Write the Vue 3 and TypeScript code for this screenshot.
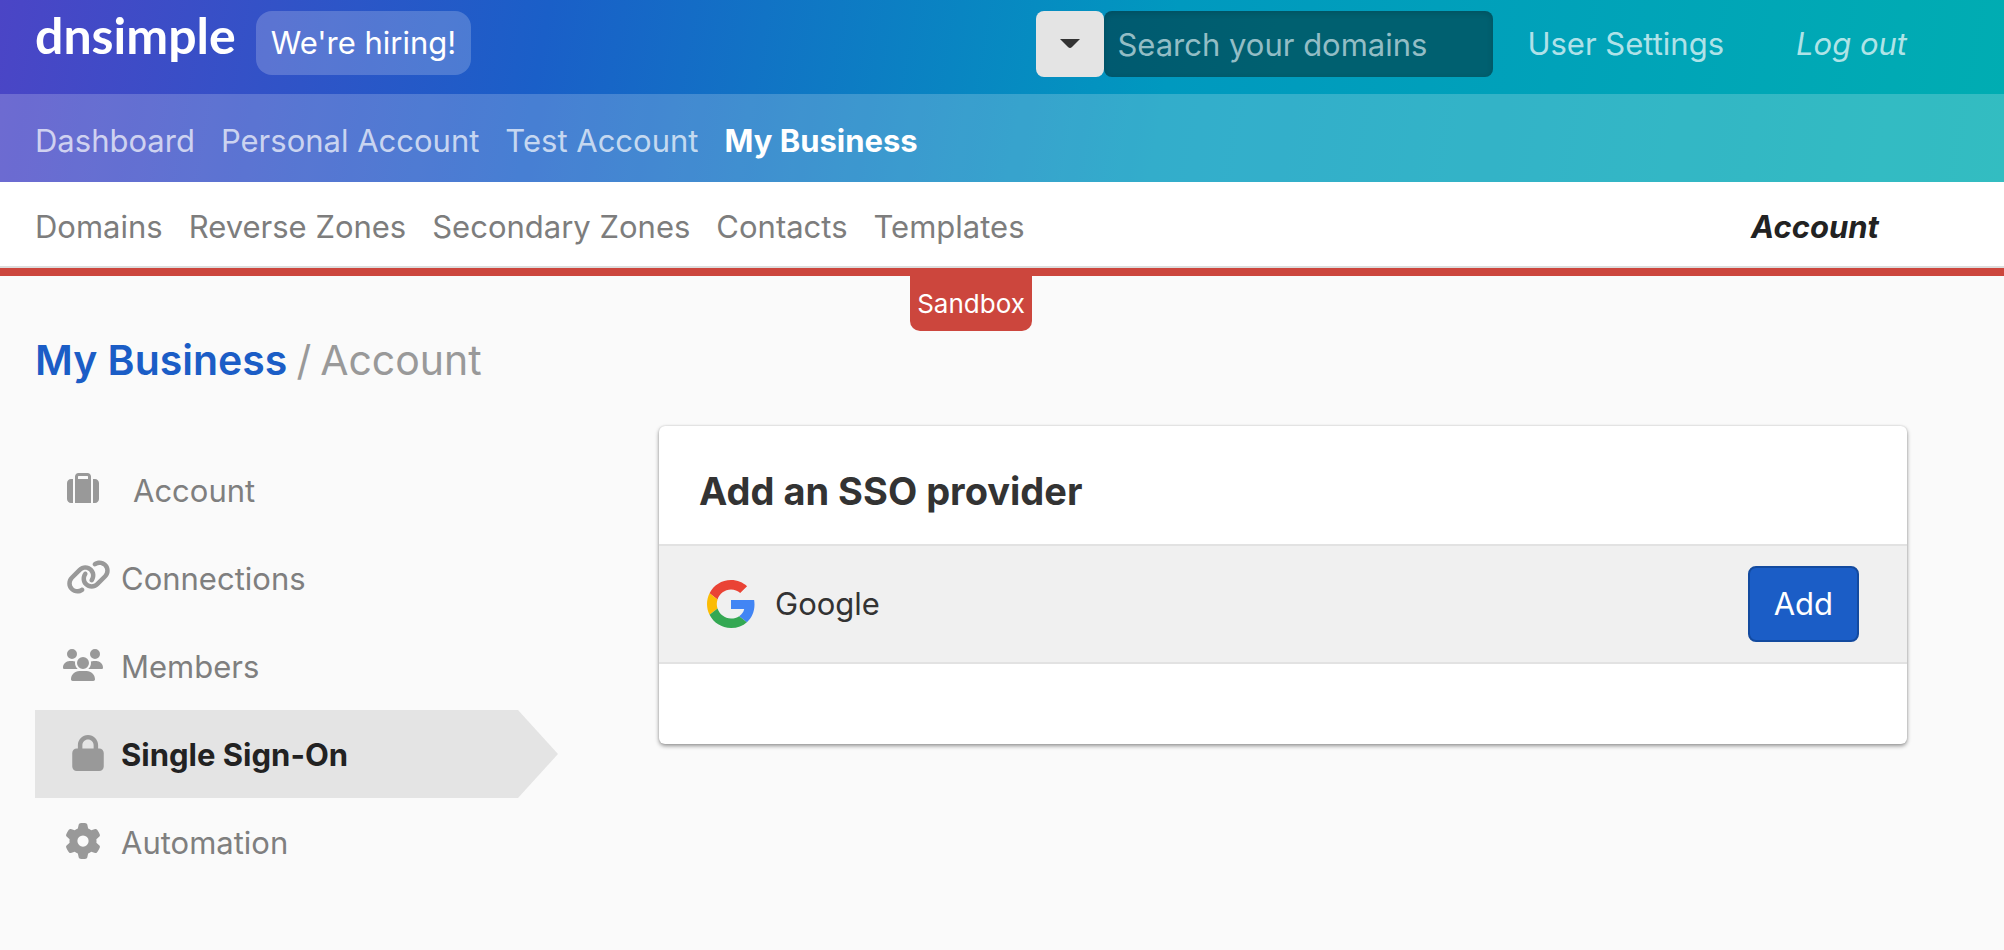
<script setup lang="ts">
import { ref } from 'vue'

interface Icon {
  width: number
  height: number
  viewBox: string
  path: string
}

interface SideItem {
  label: string
  icon: Icon
  active?: boolean
  inset?: boolean
  spaced?: boolean
}

const query = ref('')

const accounts = ['Dashboard', 'Personal Account', 'Test Account', 'My Business']
const sections = ['Domains', 'Reverse Zones', 'Secondary Zones', 'Contacts', 'Templates']

const suitcase: Icon = {
  width: 32,
  height: 32,
  viewBox: '0 0 512 512',
  path: 'M176 56V96H336V56c0-4.400-3.600-8-8-8H184c-4.400 0-8 3.600-8 8zM128 96V56c0-30.900 25.100-56 56-56H328c30.900 0 56 25.100 56 56V96v32V480H128V128 96zM64 96H96V480H64c-35.300 0-64-28.700-64-64V160c0-35.300 28.700-64 64-64zM448 480H416V96h32c35.300 0 64 28.700 64 64V416c0 35.300-28.700 64-64 64z',
}

const link: Icon = {
  width: 45,
  height: 36,
  viewBox: '0 0 640 512',
  path: 'M579.8 267.7c56.5-56.5 56.5-148 0-204.5c-50-50-128.8-56.5-186.3-15.4l-1.6 1.1c-14.4 10.3-17.7 30.3-7.4 44.6s30.3 17.7 44.6 7.4l1.6-1.1c32.1-22.9 76-19.3 103.8 8.6c31.5 31.5 31.5 82.500 0 114L422.3 334.8c-31.5 31.5-82.5 31.5-114 0c-27.9-27.9-31.5-71.8-8.6-103.8l1.1-1.6c10.3-14.4 6.9-34.4-7.4-44.6s-34.4-6.9-44.6 7.4l-1.1 1.6C206.5 251.2 213 330 263 380c56.5 56.5 148 56.5 204.5 0L579.8 267.7zM60.2 244.3c-56.5 56.5-56.5 148 0 204.5c50 50 128.8 56.5 186.3 15.4l1.6-1.1c14.4-10.3 17.7-30.3 7.4-44.6s-30.3-17.7-44.6-7.4l-1.6 1.1c-32.1 22.9-76 19.3-103.8-8.6C74 372 74 321 105.5 289.5L217.7 177.2c31.5-31.5 82.5-31.5 114 0c27.9 27.9 31.5 71.8 8.6 103.9l-1.1 1.6c-10.3 14.4-6.9 34.4 7.4 44.6s34.4 6.9 44.6-7.4l1.1-1.6C433.5 260.8 427 182 377 132c-56.5-56.5-148-56.5-204.5 0L60.2 244.3z',
}

const users: Icon = {
  width: 40,
  height: 32,
  viewBox: '0 0 640 512',
  path: 'M144 0a80 80 0 1 1 0 160A80 80 0 1 1 144 0zM512 0a80 80 0 1 1 0 160A80 80 0 1 1 512 0zM0 298.7C0 239.8 47.8 192 106.700 192h42.7c15.9 0 31 3.500 44.600 9.700c-1.300 7.200-1.900 14.700-1.900 22.300c0 38.200 16.800 72.500 43.300 96c-.2 0-.4 0-.7 0H21.300C9.600 320 0 310.400 0 298.700zM405.300 320c-.2 0-.4 0-.7 0c26.600-23.500 43.300-57.800 43.300-96c0-7.600-.7-15-1.900-22.300c13.600-6.300 28.700-9.700 44.600-9.700h42.700C592.200 192 640 239.800 640 298.700c0 11.800-9.600 21.300-21.300 21.300H405.300zM224 224a96 96 0 1 1 192 0 96 96 0 1 1 -192 0zM128 485.300C128 411.700 187.700 352 261.300 352H378.700C452.300 352 512 411.700 512 485.300c0 14.700-11.900 26.700-26.700 26.700H154.700c-14.700 0-26.700-11.900-26.700-26.700z',
}

const lock: Icon = {
  width: 32,
  height: 36,
  viewBox: '0 0 448 512',
  path: 'M144 144v48H304V144c0-44.200-35.800-80-80-80s-80 35.800-80 80zM80 192V144C80 64.500 144.500 0 224 0s144 64.500 144 144v48h16c35.300 0 64 28.700 64 64V448c0 35.300-28.700 64-64 64H64c-35.300 0-64-28.700-64-64V256c0-35.300 28.700-64 64-64H80z',
}

const gear: Icon = {
  width: 36,
  height: 36,
  viewBox: '0 0 512 512',
  path: 'M495.9 166.6c3.2 8.7 .5 18.4-6.4 24.6l-43.3 39.4c1.1 8.3 1.7 16.8 1.7 25.4s-.6 17.1-1.7 25.4l43.3 39.4c6.9 6.2 9.6 15.9 6.4 24.6c-4.4 11.9-9.7 23.300-15.800 34.300l-4.700 8.100c-6.600 11-14 21.400-22.100 31.200c-5.900 7.200-15.700 9.600-24.500 6.800l-55.700-17.700c-13.400 10.300-28.200 18.900-44 25.400l-12.500 57.100c-2 9.100-9 16.300-18.200 17.800c-13.800 2.300-28 3.500-42.500 3.500s-28.700-1.200-42.500-3.500c-9.200-1.500-16.200-8.700-18.200-17.800l-12.500-57.100c-15.800-6.500-30.600-15.100-44-25.400L83.100 425.900c-8.800 2.800-18.600 .3-24.500-6.800c-8.100-9.800-15.500-20.200-22.100-31.200l-4.700-8.100c-6.100-11-11.400-22.400-15.800-34.300c-3.200-8.700-.5-18.400 6.400-24.600l43.300-39.400C64.600 273.100 64 264.600 64 256s.6-17.100 1.700-25.400L22.400 191.200c-6.900-6.200-9.600-15.900-6.400-24.600c4.400-11.900 9.700-23.300 15.800-34.300l4.700-8.100c6.600-11 14-21.400 22.100-31.200c5.900-7.200 15.700-9.600 24.500-6.800l55.700 17.700c13.400-10.300 28.200-18.900 44-25.400l12.500-57.100c2-9.100 9-16.300 18.200-17.800C227.300 1.200 241.500 0 256 0s28.700 1.200 42.500 3.500c9.200 1.500 16.200 8.700 18.200 17.800l12.500 57.100c15.800 6.500 30.600 15.100 44 25.400l55.700-17.700c8.800-2.800 18.600-.3 24.500 6.800c8.100 9.800 15.500 20.200 22.100 31.200l4.700 8.100c6.100 11 11.400 22.400 15.800 34.300zM256 336a80 80 0 1 0 0-160 80 80 0 1 0 0 160z',
}

const sideItems: SideItem[] = [
  { label: 'Account', icon: suitcase, spaced: true },
  { label: 'Connections', icon: link, inset: true },
  { label: 'Members', icon: users },
  { label: 'Single Sign-On', icon: lock, active: true, inset: true },
  { label: 'Automation', icon: gear },
]
</script>

<template>
  <div class="page">
    <header class="masthead">
      <div class="topbar">
        <a class="logo" href="#">dnsimple</a>
        <a class="hiring" href="#">We're hiring!</a>
        <form class="search" role="search" @submit.prevent>
          <button class="scope" type="button" aria-label="Search scope">
            <svg width="20" height="10" viewBox="0 0 20 10" aria-hidden="true">
              <path d="M0 0H20L12 8Q10 10 8 8Z" fill="#333" />
            </svg>
          </button>
          <input
            v-model="query"
            class="query"
            type="text"
            aria-label="Search your domains"
            placeholder="Search your domains"
          />
        </form>
        <a class="top-link" href="#">User Settings</a>
        <a class="top-link logout" href="#">Log out</a>
      </div>
      <nav class="accounts" aria-label="Accounts">
        <a
          v-for="name in accounts"
          :key="name"
          href="#"
          :class="{ current: name === 'My Business' }"
        >{{ name }}</a>
      </nav>
    </header>

    <nav class="sections" aria-label="Sections">
      <a v-for="name in sections" :key="name" href="#">{{ name }}</a>
      <a class="section-account" href="#">Account</a>
    </nav>

    <div class="environment">
      <span class="sandbox">Sandbox</span>
    </div>

    <main class="content">
      <h1 class="crumbs">
        <a href="#">My Business</a>
        <span>/</span>
        <span>Account</span>
      </h1>

      <div class="columns">
        <nav class="side" aria-label="Account settings">
          <a
            v-for="item in sideItems"
            :key="item.label"
            href="#"
            class="side-item"
            :class="{ active: item.active, inset: item.inset, spaced: item.spaced }"
          >
            <span class="slot">
              <svg
                :width="item.icon.width"
                :height="item.icon.height"
                :viewBox="item.icon.viewBox"
                aria-hidden="true"
              >
                <path :d="item.icon.path" fill="currentColor" fill-rule="evenodd" />
              </svg>
            </span>
            <span>{{ item.label }}</span>
          </a>
        </nav>

        <section class="card">
          <h2>Add an SSO provider</h2>
          <div class="provider">
            <svg width="48" height="48" viewBox="0 0 48 48" aria-hidden="true">
              <path fill="#EA4335" d="M24 9.500c3.540 0 6.710 1.220 9.210 3.600l6.850-6.850C35.900 2.380 30.470 0 24 0 14.620 0 6.510 5.380 2.560 13.220l7.980 6.190C12.430 13.720 17.740 9.500 24 9.500z" />
              <path fill="#4285F4" d="M47.500 24.550c0-1.570-.15-3.090-.38-4.550H24v9.020h13.200c-.58 2.960-2.400 5.480-5.040 7.180l7.730 6c4.800-4.180 7.610-10.360 7.610-17.650z" />
              <path fill="#FBBC05" d="M10.530 28.590c-.48-1.450-.76-2.990-.76-4.590s.27-3.140.76-4.590l-7.980-6.190C.92 16.460 0 20.120 0 24c0 3.880.92 7.540 2.560 10.780l7.970-6.190z" />
              <path fill="#34A853" d="M24 48c6.480 0 11.930-2.130 15.890-5.810l-7.730-6c-2.150 1.450-4.920 2.300-8.160 2.300-6.260 0-11.570-4.220-13.470-9.910l-7.980 6.190C6.510 42.620 14.620 48 24 48z" />
            </svg>
            <span>Google</span>
            <button class="add" type="button">Add</button>
          </div>
        </section>
      </div>
    </main>
  </div>
</template>

<style>
body {
  margin: 0;
  background: #fafafa;
}
</style>

<style scoped>
.page {
  min-height: 100vh;
  background: #fafafa;
  color: #333;
  font-family: Inter, "Liberation Sans", sans-serif;
  font-size: 31px;
  line-height: 40px;
}

a {
  color: inherit;
  text-decoration: none;
}

.masthead {
  background: linear-gradient(100deg, #4b45c6 0%, #1a5fc8 27%, #0099bf 58%, #00adb2 100%);
  color: #fff;
}

.topbar {
  display: flex;
  align-items: flex-start;
  height: 94px;
  box-sizing: border-box;
  padding: 11px 97px 0 35px;
}

.logo {
  font-family: Lato, "Open Sans", sans-serif;
  font-size: 50px;
  font-weight: 700;
  line-height: 48px;
}

.hiring {
  margin-left: 20px;
  padding: 12px 15px;
  border-radius: 16px;
  background: rgba(255, 255, 255, 0.2);
}

.search {
  display: flex;
  margin-left: auto;
}

.scope {
  display: flex;
  align-items: center;
  justify-content: center;
  width: 68px;
  height: 66px;
  padding: 0;
  border: 0;
  border-radius: 8px;
  background: #e4e4e4;
}

.query {
  width: 389px;
  height: 66px;
  box-sizing: border-box;
  padding: 0 13px;
  border: 0;
  border-radius: 8px;
  background: linear-gradient(90deg, #005a70, #006070 45%);
  box-shadow: inset 0 2px 6px rgba(0, 0, 0, 0.15);
  color: #fff;
  font: inherit;
}

.query::placeholder {
  color: #93bdc5;
  opacity: 1;
}

.top-link {
  margin-left: 34px;
  padding: 13px 0;
  color: rgba(255, 255, 255, 0.7);
}

.logout {
  margin-left: 72px;
  font-style: italic;
}

.accounts {
  display: flex;
  align-items: center;
  gap: 26px;
  height: 88px;
  padding: 6px 35px 0;
  box-sizing: border-box;
  background: rgba(255, 255, 255, 0.2);
}

.accounts a {
  color: rgba(255, 255, 255, 0.7);
}

.accounts .current {
  color: #fff;
  font-weight: 700;
}

.sections {
  display: flex;
  align-items: center;
  gap: 26px;
  height: 84px;
  padding: 6px 125px 0 35px;
  box-sizing: border-box;
  background: #fff;
  color: #7d7d7d;
}

.section-account {
  margin-left: auto;
  color: #222;
  font-style: italic;
  font-weight: 700;
}

.environment {
  position: relative;
  height: 8px;
  border-top: 2px solid #ddd;
  background: #cc463d;
}

.sandbox {
  position: absolute;
  top: 8px;
  left: calc(50% - 92px);
  width: 122px;
  height: 55px;
  border-radius: 0 0 10px 10px;
  background: #cc463d;
  color: #fff;
  font-size: 26px;
  line-height: 55px;
  text-align: center;
}

.content {
  padding: 54px 97px 64px 35px;
}

.crumbs {
  display: flex;
  gap: 9px;
  margin: 0;
  color: #999;
  font-size: 41px;
  font-weight: 400;
  line-height: 60px;
}

.crumbs a {
  color: #1b5dc6;
  font-weight: 600;
}

.columns {
  display: grid;
  grid-template-columns: 523px minmax(0, 1fr);
  column-gap: 101px;
  align-items: start;
  margin-top: 36px;
}

.side {
  margin-top: 20px;
}

.side-item {
  display: flex;
  align-items: center;
  height: 88px;
  box-sizing: border-box;
  padding: 2px 0 0 28px;
  color: #7f7f7f;
}

.slot {
  display: flex;
  justify-content: center;
  width: 40px;
  margin-right: 18px;
  padding-bottom: 4px;
  color: #999;
}

.slot svg {
  flex: none;
}

.inset .slot {
  margin-right: 13px;
  margin-left: 5px;
}

.spaced .slot {
  margin-right: 30px;
}

.active {
  background: #e4e4e4;
  clip-path: polygon(0 0, calc(100% - 40px) 0, 100% 50%, calc(100% - 40px) 100%, 0 100%);
  color: #222;
  font-weight: 700;
}

.card {
  padding-bottom: 80px;
  border-radius: 6px;
  background: #fff;
  box-shadow: 0 2px 4px rgba(0, 0, 0, 0.4), 0 0 2px rgba(0, 0, 0, 0.15);
}

.card h2 {
  margin: 0;
  padding: 41px 40px 29px;
  font-size: 38px;
  font-weight: 700;
  line-height: 48px;
}

.provider {
  display: flex;
  align-items: center;
  padding: 20px 48px;
  border-top: 2px solid #e2e2e2;
  border-bottom: 2px solid #e2e2e2;
  background: #f0f0f0;
}

.provider span {
  margin-left: 20px;
}

.add {
  height: 76px;
  margin-left: auto;
  padding: 0 24px;
  border: 2px solid #134a9f;
  border-radius: 8px;
  background: #1b5dc6;
  color: #fff;
  font: inherit;
}
</style>
